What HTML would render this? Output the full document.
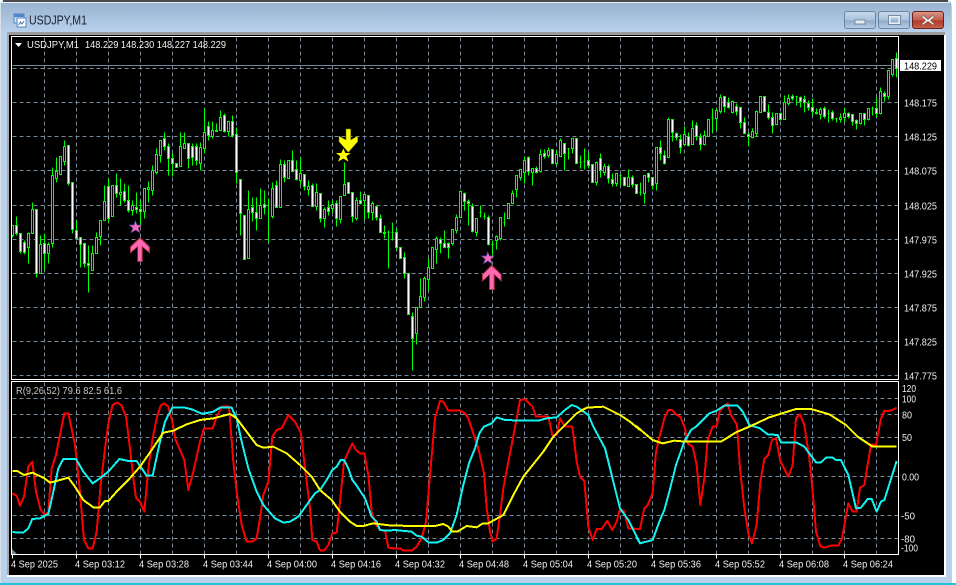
<!DOCTYPE html>
<html><head><meta charset="utf-8"><title>USDJPY,M1</title>
<style>html,body{margin:0;padding:0;background:#fff;overflow:hidden}svg{display:block}text{font-family:"Liberation Sans",sans-serif;white-space:pre}</style>
</head><body>
<svg xmlns="http://www.w3.org/2000/svg" width="956" height="585" viewBox="0 0 956 585">
<defs>
<linearGradient id="tb" x1="0" y1="0" x2="0" y2="1"><stop offset="0" stop-color="#97b2d0"/><stop offset="1" stop-color="#b9d1ea"/></linearGradient>
<linearGradient id="bt" x1="0" y1="0" x2="0" y2="1"><stop offset="0" stop-color="#c9d9ea"/><stop offset=".5" stop-color="#a9c2dc"/><stop offset=".55" stop-color="#8fabc9"/><stop offset="1" stop-color="#b7cfe6"/></linearGradient>
<linearGradient id="cl" x1="0" y1="0" x2="0" y2="1"><stop offset="0" stop-color="#d99a8c"/><stop offset=".5" stop-color="#c45a48"/><stop offset=".55" stop-color="#b03a28"/><stop offset="1" stop-color="#c8644c"/></linearGradient>
</defs>
<rect width="956" height="585" fill="#fff"/>
<!-- window frame -->
<path d="M0 583V6Q0 0 6 0H946Q952 0 952 8V583Z" fill="#b9d1ea"/>
<rect x="1" y="2" width="950" height="30" fill="url(#tb)"/>
<rect x="3" y="0" width="945" height="2" fill="#4a4a4a"/>
<rect x="1" y="2" width="949" height="1" fill="#e8eef5"/>
<rect x="0" y="2" width="1" height="581" fill="#d8e0e8"/>
<rect x="0" y="583" width="956" height="2" fill="#22c4d8"/>
<rect x="7" y="32" width="938" height="3" fill="#9a9a9a"/>
<rect x="7" y="32" width="2" height="545" fill="#a8a8a8"/>
<rect x="7" y="575" width="939" height="2" fill="#fff"/>
<rect x="944" y="35" width="2" height="542" fill="#fff"/>
<rect x="9" y="35" width="935" height="540" fill="#000"/>
<!-- title -->
<rect x="14" y="14" width="10" height="9" fill="#cfe0f2" stroke="#4f86c6"/>
<rect x="14" y="14" width="10" height="3" fill="#4f86c6"/>
<rect x="17" y="18" width="9" height="9" fill="#fff" stroke="#4f86c6"/>
<path d="M18.5 25l2-3 1.500 2 2-3" fill="none" stroke="#3a70b8"/>
<text x="29" y="24.500" font-size="12.500" fill="#1c2030" textLength="58" lengthAdjust="spacingAndGlyphs">USDJPY,M1</text>
<!-- buttons -->
<rect x="844.500" y="11.500" width="31" height="17" rx="2.500" fill="url(#bt)" stroke="#6b84a0"/>
<rect x="855" y="20" width="10" height="4" fill="#e8edf2" stroke="#5a6a7c" stroke-width=".7"/>
<rect x="878.500" y="11.500" width="31" height="17" rx="2.500" fill="url(#bt)" stroke="#6b84a0"/>
<rect x="889.500" y="16.500" width="10" height="7" fill="none" stroke="#e8edf2" stroke-width="2"/>
<rect x="888.500" y="15.500" width="12" height="9" fill="none" stroke="#5a6a7c" stroke-width=".7"/>
<rect x="912.500" y="11.500" width="31" height="17" rx="2.500" fill="url(#cl)" stroke="#6b2020"/>
<path d="M923 15.500l5 4 5-4 1.500 1.500-4 3.500 4 3.500-1.500 1-5-3.500-5 3.500-1.500-1 4-3.500-4-3.500z" fill="#f0f0f0" stroke="#7a5a50" stroke-width=".6"/>

<!-- chart borders -->
<g transform="translate(.5,.5)" fill="none" shape-rendering="crispEdges">
<!-- grid -->
<path stroke="#778899" stroke-dasharray="4 3" d="M44 37V379M76 37V379M108 37V379M140 37V379M172 37V379M204 37V379M236 37V379M268 37V379M300 37V379M332 37V379M364 37V379M396 37V379M428 37V379M460 37V379M492 37V379M524 37V379M556 37V379M588 37V379M620 37V379M652 37V379M684 37V379M716 37V379M748 37V379M780 37V379M812 37V379M844 37V379M876 37V379M12 68H898M12 102H898M12 136H898M12 170H898M12 205H898M12 239H898M12 273H898M12 307H898M12 341H898M12 375H898"/>
<path stroke="#778899" stroke-dasharray="4 3" d="M44 382V554M76 382V554M108 382V554M140 382V554M172 382V554M204 382V554M236 382V554M268 382V554M300 382V554M332 382V554M364 382V554M396 382V554M428 382V554M460 382V554M492 382V554M524 382V554M556 382V554M588 382V554M620 382V554M652 382V554M684 382V554M716 382V554M748 382V554M780 382V554M812 382V554M844 382V554M876 382V554M12 398H898M12 414H898M12 437H898M12 476H898M12 515H898M12 538H898"/>
<path stroke="#778899" d="M12 65H898"/>
<!-- candle wicks -->
<path stroke="#00ff00" d="M12 225V237M16 216V235M20 233V253M24 240V254M28 232V263M32 202V233M36 209V277M40 235V273M44 233V270M48 242V263M52 167V247M56 157V182M60 156V174M64 140V165M68 145V185M72 182V233M76 220V238M80 237V267M84 243V267M88 245V292M92 245V270M96 232V253M100 220V245M104 185V220M108 178V222M112 185V216M116 173V197M120 178V205M124 183V202M128 185V212M132 200V215M136 192V213M140 200V225M144 188V218M148 181V202M152 165V195M156 148V174M160 140V162M164 132V150M168 143V175M172 153V176M176 163V167M180 132V166M184 132V148M188 143V168M192 143V165M196 143V165M200 142V170M204 108V153M208 121V140M212 121V138M216 123V131M220 110V130M224 113V132M228 121V136M232 115V137M236 127V183M240 179V235M244 215V259M248 190V258M252 197V221M256 197V230M260 188V218M264 190V214M268 198V242M272 182V218M276 180V207M280 159V207M284 160V182M288 160V178M292 150V171M296 160V180M300 157V185M304 174V190M308 180V195M312 183V206M316 183V210M320 193V222"/>
<path stroke="#00ff00" d="M324 207V227M328 200V215M332 200V212M336 200V226M340 196V223M344 162V195M348 182V193M352 192V222M356 197V220M360 191V204M364 194V219M368 195V218M372 201V220M376 205V220M380 214V232M384 225V238M388 230V268M392 222V240M396 228V250M400 247V258M404 252V278M408 273V314M412 312V370M416 307V344M420 278V307M424 276V301M428 258V290M432 247V268M436 236V263M440 237V253M444 230V247M448 242V258M452 229V245M456 214V233M460 190V217M464 192V210M468 199V225M472 203V232M476 218V236M480 205V217M484 212V219M488 215V245M492 240V255M496 235V249M500 217V240M504 212V226M508 203V218M512 190V203M516 175V197M520 169V180M524 156V183M528 156V175M532 168V185M536 166V173M540 149V172M544 149V158M548 147V157M552 149V163M556 150V165M560 138V156M564 143V170M568 148V159M572 138V153M576 138V163M580 155V168M584 148V169M588 152V168M592 164V182M596 161V185M600 153V177M604 163V175M608 164V183M612 173V186M616 173V186M620 174V185M624 177V185M628 169V186M632 175V187M636 184V193M640 182V195M644 175V203M648 172V182M652 177V189M656 147V190M660 140V160M664 150V164M668 117V157M672 119V141M676 132V140M680 134V153M684 126V145M688 132V146M692 120V144M696 122V140M700 133V150M704 130V145M708 119V136M712 108V133M716 108V130M720 94V113M724 96V112M728 97V108M732 100V113M736 103V115M740 107V128M744 117V133M748 132V146M752 128V138M756 110V136M760 96V112M764 96V111M768 104V119M772 112V133M776 113V124M780 112V120M784 95V119M788 94V105M792 94V100M796 96V105M800 96V107M804 95V112M808 100V110M812 98V115M816 108V114M820 107V119M824 106V118M828 109V122M832 110V120M836 117V122M840 113V122M844 107V122M848 112V118M852 114V125M856 119V129M860 113V124M864 113V125M868 108V120M872 106V115M876 97V117M880 87V114M884 91V101M888 70V99M892 59V76M896 52V77"/>
<!-- doji dashes -->
<path stroke="#00ff00" d="M387 232h2M391 232h2M479 212h2M483 216h2M491 244h2M503 222h2M567 148h2M579 162h2M583 161h2M619 175h2M639 192h2M711 117h2M795 96h2M827 113h2M835 118h2M871 108h2"/>
<!-- white bodies -->
<path stroke="#00ff00" fill="#fff" d="M15 225V233h2V225zM19 233V251h2V233zM23 242V252h2V242zM35 209V273h2V209zM43 243V253h2V243zM67 145V183h2V145zM71 182V229h2V182zM75 230V238h2V230zM79 237V244h2V237zM83 243V263h2V243zM87 263V265h2V263zM107 186V218h2V186zM115 185V193h2V185zM123 191V200h2V191zM127 200V210h2V200zM135 207V209h2V207zM139 209V211h2V209zM163 138V146h2V138zM167 146V158h2V146zM171 158V163h2V158zM175 163V167h2V163zM187 143V158h2V143zM191 146V157h2V146zM195 146V160h2V146zM207 126V135h2V126zM223 115V131h2V115zM231 121V135h2V121zM235 134V172h2V134zM239 179V213h2V179zM243 215V259h2V215zM251 207V212h2V207zM255 212V218h2V212zM263 204V207h2V204zM275 185V207h2V185zM283 164V177h2V164zM291 160V171h2V160zM295 169V179h2V169zM303 174V186h2V174zM311 185V206h2V185zM319 193V218h2V193zM327 207V211h2V207zM335 203V218h2V203zM347 182V193h2V182zM351 192V216h2V192zM359 200V203h2V200zM367 195V212h2V195zM375 206V217h2V206zM379 218V232h2V218zM383 232V233h2V232zM395 232V247h2V232zM399 247V258h2V247zM403 257V273h2V257zM407 273V314h2V273zM411 316V338h2V316zM439 239V243h2V239zM443 243V247h2V243zM447 243V247h2V243zM463 193V201h2V193zM467 201V203h2V201zM471 206V231h2V206zM487 217V244h2V217zM527 157V171h2V157zM535 168V172h2V168zM543 153V156h2V153zM551 149V163h2V149zM563 143V153h2V143zM575 138V163h2V138zM587 160V165h2V160zM591 164V182h2V164zM599 158V170h2V158zM607 166V178h2V166zM611 179V183h2V179zM623 177V185h2V177zM631 177V184h2V177zM635 184V193h2V184zM647 173V177h2V173zM651 177V185h2V177zM659 147V153h2V147zM663 155V163h2V155zM671 119V132h2V119zM675 133V137h2V133zM679 139V147h2V139zM687 136V145h2V136zM695 125V136h2V125zM699 137V144h2V137zM723 96V106h2V96zM727 102V107h2V102zM735 106V111h2V106zM739 107V122h2V107zM743 122V133h2V122zM747 134V136h2V134zM763 96V111h2V96zM767 112V117h2V112zM771 117V125h2V117zM779 113V119h2V113zM791 96V98h2V96zM799 97V101h2V97zM803 99V102h2V99zM807 103V107h2V103zM811 107V111h2V107zM815 112V113h2V112zM823 108V116h2V108zM831 112V118h2V112zM847 113V116h2V113zM851 114V121h2V114zM855 120V123h2V120zM863 113V119h2V113zM875 108V113h2V108zM883 93V96h2V93zM895 58V68h2V58z"/>
<!-- black bodies -->
<path stroke="#00ff00" fill="#000" d="M11 225V235h2V225zM27 233V247h2V233zM31 209V233h2V209zM39 244V273h2V244zM47 244V253h2V244zM51 175V243h2V175zM55 171V178h2V171zM59 156V174h2V156zM63 146V161h2V146zM91 253V270h2V253zM95 237V253h2V237zM99 220V236h2V220zM103 201V220h2V201zM111 185V216h2V185zM119 192V194h2V192zM131 205V210h2V205zM143 188V211h2V188zM147 187V189h2V187zM151 170V190h2V170zM155 154V172h2V154zM159 140V155h2V140zM179 146V166h2V146zM183 143V148h2V143zM199 147V163h2V147zM203 132V148h2V132zM211 130V136h2V130zM215 130V131h2V130zM219 117V130h2V117zM227 121V131h2V121zM247 209V258h2V209zM259 205V218h2V205zM271 188V216h2V188zM279 164V207h2V164zM287 160V178h2V160zM299 173V180h2V173zM307 186V189h2V186zM315 192V206h2V192zM323 209V218h2V209zM331 204V208h2V204zM339 196V219h2V196zM343 184V195h2V184zM355 200V218h2V200zM363 194V200h2V194zM371 203V212h2V203zM415 307V333h2V307zM419 296V307h2V296zM423 278V297h2V278zM427 267V279h2V267zM431 247V268h2V247zM435 238V249h2V238zM451 229V243h2V229zM455 217V230h2V217zM459 191V217h2V191zM475 218V232h2V218zM495 236V240h2V236zM499 217V238h2V217zM507 203V218h2V203zM511 193V203h2V193zM515 175V189h2V175zM519 169V177h2V169zM523 160V172h2V160zM531 168V172h2V168zM539 154V171h2V154zM547 150V155h2V150zM555 154V163h2V154zM559 140V156h2V140zM571 138V148h2V138zM595 162V182h2V162zM603 166V172h2V166zM615 173V183h2V173zM627 177V186h2V177zM643 175V193h2V175zM655 147V183h2V147zM667 119V157h2V119zM683 134V144h2V134zM691 128V144h2V128zM703 135V144h2V135zM707 119V136h2V119zM715 110V118h2V110zM719 97V111h2V97zM731 101V112h2V101zM751 131V137h2V131zM755 111V133h2V111zM759 96V112h2V96zM775 113V124h2V113zM783 102V119h2V102zM787 98V103h2V98zM819 109V114h2V109zM839 117V119h2V117zM843 113V117h2V113zM859 113V123h2V113zM867 108V119h2V108zM879 91V113h2V91zM887 70V96h2V70zM891 59V74h2V59z"/>
<!-- panel borders -->
<rect x="11" y="36" width="887" height="343" stroke="#fff"/>
<path stroke="#fff" d="M11 381H898V554H11ZM12 554V558M76 554V558M140 554V558M204 554V558M268 554V558M332 554V558M396 554V558M460 554V558M524 554V558M588 554V558M652 554V558M716 554V558M780 554V558M844 554V558"/>
</g>
<!-- price line label -->
<rect x="900" y="60" width="41" height="11" fill="#fff"/>
<text font-size="10.500" fill="#000" x="904" y="69.500" textLength="33" lengthAdjust="spacingAndGlyphs">148.229</text>
<g font-size="10.500" fill="#f0f0f0" lengthAdjust="spacingAndGlyphs">
<text x="904" y="106.500" textLength="33" lengthAdjust="spacingAndGlyphs">148.175</text>
<text x="904" y="140.500" textLength="33" lengthAdjust="spacingAndGlyphs">148.125</text>
<text x="904" y="174.500" textLength="33" lengthAdjust="spacingAndGlyphs">148.075</text>
<text x="904" y="209.500" textLength="33" lengthAdjust="spacingAndGlyphs">148.025</text>
<text x="904" y="243.500" textLength="33" lengthAdjust="spacingAndGlyphs">147.975</text>
<text x="904" y="277.500" textLength="33" lengthAdjust="spacingAndGlyphs">147.925</text>
<text x="904" y="311.500" textLength="33" lengthAdjust="spacingAndGlyphs">147.875</text>
<text x="904" y="345.500" textLength="33" lengthAdjust="spacingAndGlyphs">147.825</text>
<text x="904" y="379.500" textLength="33" lengthAdjust="spacingAndGlyphs">147.775</text>
<text x="902" y="392" textLength="14" lengthAdjust="spacingAndGlyphs">120</text>
<text x="902" y="402.500" textLength="14" lengthAdjust="spacingAndGlyphs">100</text>
<text x="902" y="418.500" textLength="10" lengthAdjust="spacingAndGlyphs">80</text>
<text x="902" y="441" textLength="10" lengthAdjust="spacingAndGlyphs">50</text>
<text x="902" y="480.500" textLength="17" lengthAdjust="spacingAndGlyphs">0.00</text>
<text x="901" y="519.500" textLength="14" lengthAdjust="spacingAndGlyphs">-50</text>
<text x="901" y="542.500" textLength="14" lengthAdjust="spacingAndGlyphs">-80</text>
<text x="901" y="551.500" textLength="17" lengthAdjust="spacingAndGlyphs">-100</text>
</g>
<!-- header texts -->
<path d="M15 43h7l-3.500 4z" fill="#fff"/>
<text x="27" y="48" font-size="10.500" fill="#f2f2f2" textLength="52" lengthAdjust="spacingAndGlyphs">USDJPY,M1</text>
<text x="85" y="48" font-size="10.500" fill="#f2f2f2" textLength="141" lengthAdjust="spacingAndGlyphs">148.229 148.230 148.227 148.229</text>
<text x="16" y="394" font-size="10.500" fill="#c8c8c8" textLength="106" lengthAdjust="spacingAndGlyphs">R(9,26,52) 79.6 82.5 61.6</text>
<path d="M12 554V549L17 554Z" fill="#778899"/>
<!-- time axis -->
<g font-size="10.500" fill="#f0f0f0">
<text x="11" y="567.500" textLength="47" lengthAdjust="spacingAndGlyphs">4 Sep 2025</text>
<text x="75" y="567.500" textLength="50" lengthAdjust="spacingAndGlyphs">4 Sep 03:12</text>
<text x="139" y="567.500" textLength="50" lengthAdjust="spacingAndGlyphs">4 Sep 03:28</text>
<text x="203" y="567.500" textLength="50" lengthAdjust="spacingAndGlyphs">4 Sep 03:44</text>
<text x="267" y="567.500" textLength="50" lengthAdjust="spacingAndGlyphs">4 Sep 04:00</text>
<text x="331" y="567.500" textLength="50" lengthAdjust="spacingAndGlyphs">4 Sep 04:16</text>
<text x="395" y="567.500" textLength="50" lengthAdjust="spacingAndGlyphs">4 Sep 04:32</text>
<text x="459" y="567.500" textLength="50" lengthAdjust="spacingAndGlyphs">4 Sep 04:48</text>
<text x="523" y="567.500" textLength="50" lengthAdjust="spacingAndGlyphs">4 Sep 05:04</text>
<text x="587" y="567.500" textLength="50" lengthAdjust="spacingAndGlyphs">4 Sep 05:20</text>
<text x="651" y="567.500" textLength="50" lengthAdjust="spacingAndGlyphs">4 Sep 05:36</text>
<text x="715" y="567.500" textLength="50" lengthAdjust="spacingAndGlyphs">4 Sep 05:52</text>
<text x="779" y="567.500" textLength="50" lengthAdjust="spacingAndGlyphs">4 Sep 06:08</text>
<text x="843" y="567.500" textLength="50" lengthAdjust="spacingAndGlyphs">4 Sep 06:24</text>
</g>
<!-- indicator lines -->
<g fill="none" stroke-width="6" stroke-linejoin="round" shape-rendering="crispEdges">
<g transform="translate(0,385) scale(.33333)">
<polyline stroke="#ff0000" points="37,325 50,332 60,362 72,335 85,245 97,230 108,320 122,375 135,390 145,380 155,250 168,210 182,140 193,85 205,85 225,180 238,300 252,465 265,490 278,490 290,440 302,300 315,190 325,115 338,60 352,52 365,62 378,95 390,190 400,280 408,338 420,350 433,380 445,250 458,160 470,100 482,62 492,55 505,65 517,110 527,165 540,195 553,225 565,315 580,260 600,170 612,130 638,130 650,95 665,65 687,65 700,230 710,320 725,420 740,470 757,470 770,460 780,400 790,330 805,290 817,155 830,135 845,130 865,90 885,110 903,145 915,250 930,370 937,465 950,470 960,497"/>
</g>
<g transform="translate(320,385) scale(.33333)">
<polyline stroke="#ff0000" points="0,497 12,497 25,480 37,445 50,443 60,350 72,230 85,200 97,175 108,195 120,205 133,205 145,270 155,380 168,420 180,435 195,437 205,488 220,490 240,490 250,497 275,497 290,485 305,460 318,410 330,270 345,100 360,48 370,50 385,77 420,77 435,85 445,100 460,145 475,190 492,265 500,370 510,440 518,470 530,460 540,390 550,310 565,230 575,180 590,100 600,45 615,43 638,65 648,95 685,95 697,150 710,150 720,100 735,125 757,125 770,230 780,275 793,288 805,425 818,465 830,432 845,432 862,408 877,435 890,410 900,372 912,378 925,430 960,432"/>
</g>
<g transform="translate(636,385) scale(.33333)">
<polyline stroke="#ff0000" points="0,432 12,432 25,370 35,360 50,325 60,200 72,150 85,100 97,75 108,75 122,90 133,95 147,130 155,175 170,185 182,240 193,360 205,280 215,165 230,125 242,123 252,75 275,55 285,90 303,120 312,250 325,370 338,450 348,475 362,420 373,290 385,222 397,210 408,165 420,160 433,228 457,275 470,240 480,100 492,88 505,120 520,220 530,320 540,440 553,483 565,488 585,482 607,482 618,460 637,355 650,380 662,380 672,308 685,300 705,178 720,180 735,100 745,78 765,77 782,68"/>
</g>
<g transform="translate(0,385) scale(.33333)">
<polyline stroke="#11f2f2" points="37,440 50,443 70,443 85,430 97,402 120,400 145,387 160,320 175,250 190,222 228,222 250,260 278,295 300,280 325,260 358,222 385,228 410,228 440,272 458,272 480,170 495,110 517,68 550,67 575,73 603,85 615,85 640,80 660,68 695,68 710,100 725,170 745,250 770,320 790,360 825,400 850,413 870,410 895,395 920,360 945,325 960,315"/>
</g>
<g transform="translate(320,385) scale(.33333)">
<polyline stroke="#11f2f2" points="0,315 20,285 37,255 50,245 62,225 72,225 85,250 97,285 112,305 135,340 155,395 170,410 180,435 200,437 225,435 275,440 290,452 305,455 325,472 350,473 370,465 390,445 410,390 430,300 447,235 465,190 478,145 492,125 515,115 530,97 555,105 610,107 655,107 680,100 710,97 735,75 755,60 770,65 805,90 820,125 855,190 875,270 900,370 925,405 960,475"/>
</g>
<g transform="translate(636,385) scale(.33333)">
<polyline stroke="#11f2f2" points="0,455 12,475 50,465 70,410 85,375 100,320 120,240 145,170 165,135 180,125 220,85 240,78 265,62 305,62 320,80 340,120 372,130 395,148 425,150 435,172 480,172 505,185 540,232 555,232 570,218 590,218 600,225 615,225 637,270 660,370 675,368 695,342 707,342 722,380 735,350 745,345 782,228"/>
</g>
<g transform="translate(0,385) scale(.33333)">
<polyline stroke="#ffff00" points="37,258 52,258 72,270 97,263 130,278 150,293 180,285 205,278 225,305 250,345 280,367 300,367 315,348 325,348 350,320 385,285 420,245 455,195 490,143 520,137 560,118 600,105 640,100 690,87 710,100 740,140 770,180 790,188 820,185 860,205 900,240 935,275 960,315"/>
</g>
<g transform="translate(320,385) scale(.33333)">
<polyline stroke="#ffff00" points="0,315 35,345 60,380 90,410 110,423 130,423 160,415 215,422 345,423 370,417 385,425 397,440 412,440 440,423 470,427 487,416 505,415 550,390 580,330 610,275 670,200 700,155 770,85 800,68 850,65 900,90 930,110 960,135"/>
</g>
<g transform="translate(636,385) scale(.33333)">
<polyline stroke="#ffff00" points="0,122 20,140 50,165 80,175 115,167 150,170 255,170 300,142 340,125 400,97 480,72 525,72 580,88 630,120 665,155 710,185 782,185"/>
</g>
</g>
<!-- signals -->
<g transform="translate(320,0) scale(.33333)">
<polygon points="78,387 92,387 92,420 113,408 113,425 85,457 57,425 57,408 78,420" fill="#ffff00" stroke="#707000" stroke-width="1.500"/>
<polygon points="70,445 76,459 92,459 79,469 86,485 70,476 54,485 61,469 48,459 64,459" fill="#ffff00"/>
</g>
<g transform="translate(0,190) scale(.33333)">
<polygon points="406,90 411,104 428,104 415,114 421,130 406,121 391,130 397,114 385,104 401,104" fill="#3a44a8"/>
<polygon points="407,94 411,106 425,106 414,114 419,127 407,119 395,127 400,114 389,106 403,106" fill="#ff69b4"/>
<polygon points="420,141 450,170 450,191 428,172 428,216 412,216 412,172 390,191 390,170" fill="#b03048"/>
<polygon points="420,146 446,171 446,185 425,167 425,213 414,213 414,167 393,186 393,171" fill="#ff69b4"/>
</g>
<g transform="translate(320,190) scale(.33333)">
<polygon points="503,183 508,197 525,197 512,207 518,224 503,214 488,224 494,207 481,197 498,197" fill="#3a44a8"/>
<polygon points="504,187 508,199 522,199 511,207 516,220 504,212 492,220 497,207 486,199 500,199" fill="#ff69b4"/>
<polygon points="515,224 545,253 545,276 524,256 524,300 507,300 507,256 486,276 486,253" fill="#b03048"/>
<polygon points="515,229 542,254 542,269 521,251 521,297 510,297 510,251 489,270 489,254" fill="#ff69b4"/>
</g>
</svg>
</body></html>
